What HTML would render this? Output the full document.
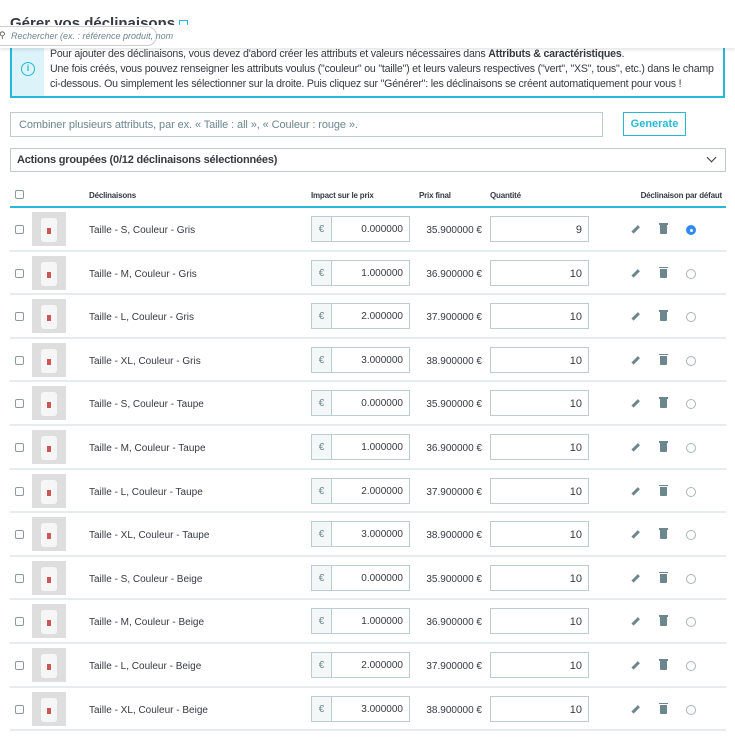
<!DOCTYPE html>
<html><head><meta charset="utf-8"><style>
*{box-sizing:border-box;margin:0;padding:0}
body{width:735px;height:750px;overflow:hidden;background:#fff;font-family:"Liberation Sans",sans-serif;color:#363a41;position:relative}
.abs{position:absolute}
.title{left:10px;top:15px;font-size:15px;font-weight:bold;color:#363a41}
.band{left:0;top:25px;width:735px;height:23px;background:#fff;box-shadow:0 2px 3px rgba(0,0,0,.1);z-index:2}
.search{left:-12px;top:26px;width:169px;height:20px;border:1px solid #ccd;border-radius:10px;background:#fff;font-size:9px;font-style:italic;color:#6c868e;padding:4px 0 0 22px;white-space:nowrap;z-index:3}
.info{left:10px;top:45px;width:715px;height:53px;border:2px solid #25b9d7;border-top:none;background:#fff}
.info .strip{position:absolute;left:0;top:0;width:32px;height:51px;background:#dcf4f9}
.info .ic{position:absolute;left:9px;top:17px;width:14px;height:14px;border:1.5px solid #25b9d7;border-radius:50%;color:#25b9d7;font-size:9px;text-align:center;line-height:11px;font-weight:bold}
.info p{position:absolute;left:38px;top:2px;font-size:10.6px;line-height:15px;color:#363a41;letter-spacing:-.2px;width:675px}
.comb{left:10px;top:112px;width:593px;height:25px;border:1px solid #bbcdd2;font-size:11px;color:#6c868e;padding:6px 8px;letter-spacing:-.1px}
.gen{left:623px;top:112px;width:63px;height:24px;border:1px solid #25b9d7;color:#25b9d7;font-size:11px;font-weight:bold;text-align:center;line-height:22px}
.act{left:10px;top:148px;width:716px;height:24px;border:1px solid #bbcdd2;font-size:11px;font-weight:bold;padding:5px 6px;letter-spacing:-.2px}
.chev{right:10px;top:5px;width:7px;height:7px;border-right:1.5px solid #363a41;border-bottom:1.5px solid #363a41;transform:rotate(45deg)}
.th{font-size:8px;font-weight:bold;color:#363a41;top:191px;letter-spacing:-.2px}
.hl{left:10px;top:206px;width:716px;height:2px;background:#25b9d7}
.cb{width:9px;height:9px;border:1px solid #8a9ba0;border-radius:2px;background:#fff}
.row{left:10px;width:716px;height:43.5px;border-bottom:2px solid #e4ecee}
.thumb{left:22px;width:34px;height:34px;background:#dedede}
.thumb:after{content:"";position:absolute;left:9px;top:6px;width:16px;height:24px;background:#f6f6f6;border-radius:3px}
.thumb:before{content:"";position:absolute;left:15px;top:16px;width:4px;height:6px;background:#c55;z-index:1}
.nm{left:79px;font-size:10px;top:17px}
.eu{left:301px;top:8px;width:99px;height:26px;border:1px solid #bbcdd2;font-size:10px}
.eu span{position:absolute;left:0;top:0;width:20px;height:24px;background:#f4f7f8;border-right:1px solid #bbcdd2;text-align:center;line-height:25px;color:#6c868e}
.eu b{position:absolute;right:6px;top:7px;font-weight:normal}
.pf{left:409px;top:17px;font-size:10px;width:63px;text-align:right}
.q{left:480px;top:8px;width:99px;height:26px;border:1px solid #bbcdd2;font-size:11px;text-align:right;padding:7px 6px}
.pen{left:621px;top:20px;width:9px;height:2.5px;background:#6c868e;transform:rotate(-45deg)}
.tr{left:650px;top:17px;width:7px;height:9px;background:#6c868e;border-radius:0 0 1px 1px}
.tr:before{content:"";position:absolute;left:-1px;top:-2px;width:9px;height:1.5px;background:#6c868e}
.rd{left:676px;top:17px;width:10px;height:10px;border:1px solid #a7b5b9;border-radius:50%}
.rd.on{background:#2f8af5;border-color:#2f8af5}
.rd.on:after{content:"";position:absolute;left:2.5px;top:2.5px;width:3px;height:3px;border-radius:50%;background:#fff}
</style></head><body>
<div class="abs title">Gérer vos déclinaisons <span style="display:inline-block;width:9px;height:9px;border:1px solid #25b9d7;vertical-align:middle"></span></div>
<div class="abs band"></div>
<div class="abs search"><span style="position:absolute;left:10px;top:3px;font-style:normal;color:#555">⚲</span>Rechercher (ex. : référence produit, nom</div>
<div class="abs info"><div class="strip"></div><div class="ic">i</div><p>Pour ajouter des déclinaisons, vous devez d'abord créer les attributs et valeurs nécessaires dans <b>Attributs &amp; caractéristiques</b>.<br>Une fois créés, vous pouvez renseigner les attributs voulus ("couleur" ou "taille") et leurs valeurs respectives ("vert", "XS", tous", etc.) dans le champ ci-dessous. Ou simplement les sélectionner sur la droite. Puis cliquez sur "Générer": les déclinaisons se créent automatiquement pour vous !</p></div>
<div class="abs comb">Combiner plusieurs attributs, par ex. « Taille : all », « Couleur : rouge ».</div>
<div class="abs gen">Generate</div>
<div class="abs act">Actions groupées (0/12 déclinaisons sélectionnées)<div class="abs chev"></div></div>
<div class="abs cb" style="left:15px;top:190px"></div>
<div class="abs th" style="left:89px">Déclinaisons</div>
<div class="abs th" style="left:311px">Impact sur le prix</div>
<div class="abs th" style="left:419px">Prix final</div>
<div class="abs th" style="left:490px">Quantité</div>
<div class="abs th" style="right:13px">Déclinaison par défaut</div>
<div class="abs hl"></div>
<div id="rows"></div>
<script>
var sz=["S","M","L","XL"],co=["Gris","Taupe","Beige"],h="";
for(var i=0;i<12;i++){var t=208+i*43.6,imp=i%4,s=sz[i%4],c=co[Math.floor(i/4)];
h+='<div class="abs row" style="top:'+t+'px"><div class="abs cb" style="left:5px;top:17px"></div><div class="abs thumb" style="top:4px"></div><div class="abs nm">Taille - '+s+', Couleur - '+c+'</div><div class="abs eu"><span>€</span><b>'+imp+'.000000</b></div><div class="abs pf">'+(35+imp)+'.900000 €</div><div class="abs q">'+(i==0?9:10)+'</div><div class="abs pen"></div><div class="abs tr"></div><div class="abs rd'+(i==0?' on':'')+'"></div></div>';}
document.getElementById("rows").innerHTML=h;
</script>
</body></html>
